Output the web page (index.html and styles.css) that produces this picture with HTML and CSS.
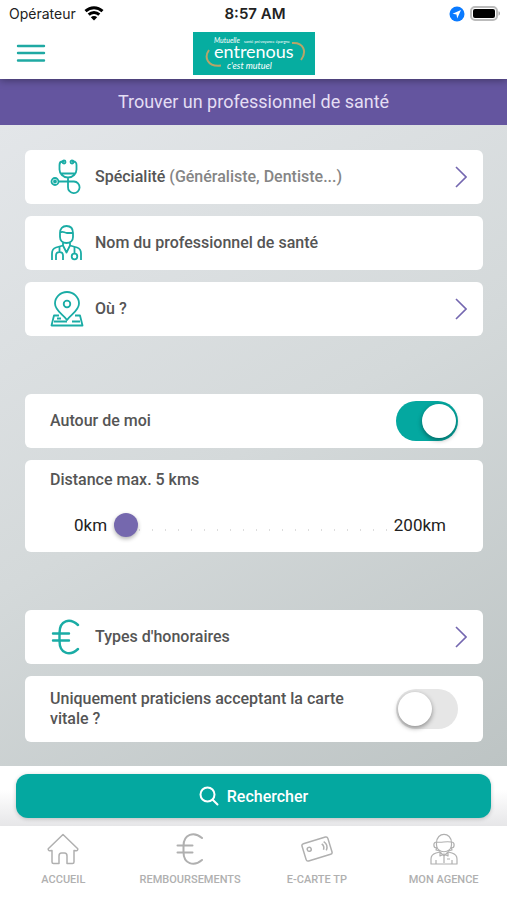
FILE: index.html
```html
<!DOCTYPE html>
<html lang="fr">
<head>
<meta charset="UTF-8">
<meta name="viewport" content="width=device-width, initial-scale=1.0">
<title>Trouver un professionnel de santé</title>
<link rel="stylesheet" href="styles.css">
</head>
<body>

<div class="status-bar">
    <div class="carrier">
        <span>Opérateur</span>
        <svg width="20" height="15" viewBox="0 0 20 15" fill="none" stroke="#000" stroke-width="3">
            <path d="M1.500 5.200C6.500.6 13.500.6 18.500 5.200"/>
            <path d="M4.700 8.700c3-2.800 7.600-2.800 10.600 0"/>
            <path d="M10 14.500 6.800 11.300a4.500 4.500 0 0 1 6.400 0z" fill="#000" stroke="none"/>
        </svg>
    </div>
    <strong class="time">8:57 AM</strong>
    <div class="indicators">
        <svg width="16" height="16" viewBox="0 0 16 16">
            <circle cx="8" cy="8" r="7.500" fill="#0a7aff"/>
            <path d="M12 4 3.500 7.800l4 .7.700 4z" fill="#fff"/>
        </svg>
        <svg width="31" height="16" viewBox="0 0 31 16">
            <rect x="1" y="1" width="26" height="13" rx="4" fill="#fff" stroke="#bbb" stroke-width="2"/>
            <rect x="3" y="3" width="22" height="9" rx="2" fill="#000"/>
            <path d="M28.500 5.300c2 .6 2 3.800 0 4.400z" fill="#aaa"/>
        </svg>
    </div>
</div>

<header class="header">
    <button class="menu-button" type="button" aria-label="Menu">
        <svg width="30" height="20" viewBox="0 0 30 20" stroke="#1fa9a3" stroke-width="2.400" stroke-linecap="round">
            <path d="M2 3h26M2 10h26M2 17.500h26"/>
        </svg>
    </button>
    <svg class="logo" width="122" height="43" viewBox="0 0 122 43">
        <rect width="122" height="43" fill="#06ada0"/>
        <g fill="#fff">
            <text class="logo-small" x="21" y="11">Mutuelle</text>
            <text class="logo-tiny" x="51" y="11">santé prévoyance épargne</text>
            <text class="logo-name" x="21" y="26">entrenous</text>
            <text class="logo-slogan" x="34" y="37">c'est mutuel</text>
        </g>
        <path d="M16 18c-5 7-2 17 12 15.500M99 11c12-1 15 9 9 17" fill="none" stroke="#b9a468" stroke-width="2"/>
    </svg>
</header>

<h1 class="page-title">Trouver un professionnel de santé</h1>

<main class="content">
    <div class="group">
        <button class="card" type="button">
            <svg class="icon" viewBox="0 0 34 36">
                <path d="M14 2.500h-1.500c-2 0-3 1.500-3 3.500v4.500c0 4 3.500 8 8.500 8s8.500-4 8.500-8V6c0-2-1-3.500-3-3.500H22M11 14.500h14M18 18.500V28"/>
                <circle cx="14" cy="3" r="1.500"/>
                <circle cx="22" cy="3" r="1.500"/>
                <circle cx="5" cy="22.500" r="3.500"/>
                <circle cx="5" cy="22.500" r="1"/>
                <path d="M8.500 22.500H24a5.800 5.800 0 1 1-6 5.500"/>
            </svg>
            <span class="label">Spécialité <span class="hint">(Généraliste, Dentiste...)</span></span>
            <svg class="chevron" viewBox="0 0 12 22"><path d="M1 1l10 10L1 21"/></svg>
        </button>
        <label class="card">
            <svg class="icon" viewBox="0 0 34 36">
                <path d="M10 8c0-4.500 2.500-7 6.500-7S23 3.500 23 8v4c0 3.500-2.500 6-6.500 6S10 15.500 10 12zM10 7.500c3.500-2 4 .5 7 .5h6"/>
                <path d="M13 17.500v3l-7 2C3 23.500 2 25.500 2 28.500V35M20 17.500v3l7 2c3 1 4 3 4 6V35"/>
                <path d="M13 20.500l3.500 7 3.500-7M9.500 21.500V27M6 35v-4.500c0-4.500 7-4.500 7 0V35M24.500 22v6.500"/>
                <circle cx="24.500" cy="31.500" r="2.800"/>
            </svg>
            <input class="name-input" type="text" placeholder="Nom du professionnel de santé" aria-label="Nom du professionnel de santé">
        </label>
        <button class="card" type="button">
            <svg class="icon" viewBox="0 0 34 36">
                <path d="M17 29C14 24 5 20 5 12.500a12 11.500 0 0 1 24 0C29 20 20 24 17 29z"/>
                <circle cx="17" cy="13" r="3.300"/>
                <path d="M9 24.500H4L1.500 34.500h31L30 24.500h-5M4 30.500h9l4 0M22 30.500h8M7 27.500h4"/>
            </svg>
            <span class="label">Où ?</span>
            <svg class="chevron" viewBox="0 0 12 22"><path d="M1 1l10 10L1 21"/></svg>
        </button>
    </div>

    <div class="group">
        <label class="card">
            <span class="label">Autour de moi</span>
            <input class="switch" type="checkbox" checked>
        </label>
        <div class="card card-distance">
            <label for="distance">Distance max. 5 kms</label>
            <div class="range-row">
                <span>0km</span>
                <input class="range" id="distance" type="range" min="5" max="200" value="5">
                <span>200km</span>
            </div>
        </div>
    </div>

    <div class="group">
        <button class="card" type="button">
            <svg class="icon euro" viewBox="0 0 34 36">
                <path d="M28 6C20-1.500 9.500 1 9.500 14v8c0 13 10.500 15.500 18.500 8M3 14.500h16M3 21.500h16"/>
            </svg>
            <span class="label">Types d'honoraires</span>
            <svg class="chevron" viewBox="0 0 12 22"><path d="M1 1l10 10L1 21"/></svg>
        </button>
        <label class="card card-tall">
            <span class="label">Uniquement praticiens acceptant la carte vitale ?</span>
            <input class="switch" type="checkbox">
        </label>
    </div>
</main>

<div class="action-bar">
    <button class="search-button" type="button">
        <svg width="20" height="20" viewBox="0 0 20 20" fill="none" stroke="#fff" stroke-width="2" stroke-linecap="round">
            <circle cx="8.500" cy="8.500" r="7"/>
            <path d="M13.700 13.700 18.500 18.500"/>
        </svg>
        Rechercher
    </button>
</div>

<nav class="tab-bar">
    <a href="#">
        <svg class="tab-icon" viewBox="0 0 32 32">
            <path d="M16 1.500 1.500 15.500c-.8 1 .3 2.500 1.500 2.200L5 17.500V29c0 1 .7 1.500 1.500 1.500H12V23c0-2 1-3 2.500-3h3c1.500 0 2.500 1 2.500 3v7.500h5.500c.8 0 1.500-.5 1.500-1.500V17.500l2 .2c1.200.3 2.300-1.200 1.500-2.200z"/>
        </svg>
        ACCUEIL
    </a>
    <a href="#">
        <svg class="tab-icon tab-euro" viewBox="0 0 32 32">
            <path d="M28 5C20-2 9.500 1 9.500 13v6c0 12 10.500 15 18.500 8M3.500 12.500h15M3.500 19.500h15"/>
        </svg>
        REMBOURSEMENTS
    </a>
    <a href="#">
        <svg class="tab-icon" viewBox="0 0 32 32">
            <g transform="rotate(-17 16 16)">
                <rect x="2.500" y="7" width="27" height="18" rx="2"/>
                <circle cx="8.500" cy="14" r="2"/>
                <path d="M22 12.500c1.500 2 1.500 4 0 6M24.500 11c2.500 3 2.500 6 0 9"/>
            </g>
        </svg>
        E-CARTE TP
    </a>
    <a href="#">
        <svg class="tab-icon tab-agent" viewBox="0 0 32 32">
            <path d="M8.500 10C8.500-1.500 23.500-1.500 23.500 10v2c0 9-15 9-15 0zM8.500 9C5 9 5 15 8.500 15M23.500 9c3.500 0 3.500 6 0 6M9 9c5 1 8-1 14 0"/>
            <path d="M3 31v-5c0-4 2-5 5-6l4-1 4 4 4-4 4 1c3 1 5 2 5 6v5zM12 19v4l4-2 4 2v-4M16 23v7M8 31v-4M24 31v-4M19 26h3M9 14l-1 3 4 1M23 14l1 3-4 1"/>
        </svg>
        MON AGENCE
    </a>
</nav>

</body>
</html>
```
FILE: styles.css
```css
* {
    box-sizing: border-box;
}

body {
    display: flex;
    flex-direction: column;
    min-height: 100vh;
    margin: 0;
    background-color: #ffffff;
    font-family: Roboto, "Liberation Sans", sans-serif;
    font-size: 16px;
    color: #555555;
}

button {
    border: none;
    font: inherit;
    color: inherit;
    cursor: pointer;
}

.status-bar {
    display: grid;
    grid-template-columns: 1fr auto 1fr;
    align-items: center;
    height: 27px;
    padding: 0 6px 0 9px;
    font-family: Inter, sans-serif;
    font-size: 14px;
    color: #222222;
}

.carrier,
.indicators {
    display: flex;
    align-items: center;
    gap: 8px;
}

.indicators {
    gap: 5px;
    justify-content: flex-end;
}

.time {
    font-size: 15px;
    font-weight: 600;
}

.header {
    position: relative;
    z-index: 1;
    display: grid;
    grid-template-columns: 1fr auto 1fr;
    align-items: center;
    height: 52px;
    padding: 0 16px;
    box-shadow: 0 1px 8px rgba(0, 0, 0, 0.4);
    clip-path: inset(0 0 -16px 0);
    background-color: #ffffff;
}

.menu-button {
    justify-self: start;
    padding: 0;
    background: none;
}

.menu-button svg,
.logo {
    display: block;
}

.logo text {
    font-family: Lato, sans-serif;
}

.logo .logo-small {
    font-size: 7px;
    font-style: italic;
}

.logo .logo-tiny {
    font-size: 4px;
}

.logo .logo-name {
    font-size: 18px;
}

.logo .logo-slogan {
    font-size: 9px;
    font-style: italic;
}

.page-title {
    margin: 0;
    background-color: #64559f;
    font-size: 18px;
    font-weight: 400;
    line-height: 46px;
    text-align: center;
    color: #e4def4;
}

.content {
    flex: 1;
    display: flex;
    flex-direction: column;
    gap: 58px;
    padding: 25px 24px 23px 25px;
    background: linear-gradient(150deg, #e3e6e9, #d4d9da 50%, #bdc4c4);
}

.group {
    display: flex;
    flex-direction: column;
    gap: 12px;
}

.card {
    display: flex;
    align-items: center;
    width: 100%;
    min-height: 54px;
    padding: 0 16px 0 25px;
    border-radius: 6px;
    background-color: #ffffff;
    font-weight: 500;
    line-height: 20px;
    text-align: left;
}

.label {
    flex: 1;
}

.hint {
    color: #858585;
}

.icon {
    width: 34px;
    height: 36px;
    margin-right: 11px;
    fill: none;
    stroke: #1aaca5;
    stroke-width: 1.8;
    stroke-linejoin: round;
}

.euro {
    stroke-width: 2.4;
    stroke-linecap: round;
}

.chevron {
    width: 12px;
    height: 22px;
    fill: none;
    stroke: #7467b0;
    stroke-width: 1.6;
}

.name-input {
    flex: 1;
    min-width: 0;
    padding: 0;
    border: none;
    outline: none;
    font: inherit;
    color: inherit;
}

.name-input::placeholder {
    color: #555555;
    opacity: 1;
}

.switch {
    appearance: none;
    flex-shrink: 0;
    width: 62px;
    height: 40px;
    margin: 0 9px 0 40px;
    border-radius: 20px;
    background-color: #e6e6e6;
    cursor: pointer;
}

.switch::before {
    content: "";
    display: block;
    width: 34px;
    height: 34px;
    margin: 3px 2px;
    border-radius: 50%;
    background-color: #ffffff;
    box-shadow: 0 2px 5px rgba(0, 0, 0, 0.4);
}

.switch:checked {
    background-color: #04a8a0;
}

.switch:checked::before {
    margin-left: 26px;
}

.card-distance {
    flex-direction: column;
    align-items: stretch;
    gap: 18px;
    padding: 10px 25px;
}

.range-row {
    display: flex;
    align-items: center;
    gap: 7px;
    padding: 0 12px 0 24px;
    font-size: 17px;
    font-weight: 400;
    color: #222222;
}

.range {
    appearance: none;
    flex: 1;
    min-width: 0;
    height: 34px;
    margin: 0;
    background: none;
}

/* tick marks along the track */
.range::-webkit-slider-runnable-track {
    height: 24px;
    background: radial-gradient(circle, #dddddd 1px, transparent 1px) 6px 5px / 13px 24px repeat-x;
}

.range::-webkit-slider-thumb {
    appearance: none;
    width: 24px;
    height: 24px;
    border-radius: 50%;
    background-color: #7568ae;
    box-shadow: 0 2px 4px rgba(0, 0, 0, 0.3);
}

.card-tall {
    min-height: 66px;
}

.action-bar {
    padding: 8px 16px;
    background: linear-gradient(#ffffff 40%, #e6e6e8);
}

.search-button {
    display: flex;
    justify-content: center;
    align-items: center;
    gap: 8px;
    width: 100%;
    height: 44px;
    border-radius: 12px;
    background-color: #04a8a0;
    box-shadow: 0 1px 4px rgba(0, 0, 0, 0.2);
    font-weight: 500;
    color: #ffffff;
}

.tab-bar {
    display: grid;
    grid-template-columns: repeat(4, 1fr);
    height: 74px;
    padding-top: 7px;
    background-color: #ffffff;
}

.tab-bar a {
    display: flex;
    flex-direction: column;
    align-items: center;
    gap: 8px;
    font-size: 11px;
    font-weight: 500;
    line-height: 14px;
    text-decoration: none;
    color: #b0b0b0;
}

.tab-icon {
    width: 32px;
    height: 32px;
    fill: none;
    stroke: #b0b0b0;
    stroke-width: 1.5;
    stroke-linejoin: round;
}

.tab-euro {
    stroke-width: 2;
    stroke-linecap: round;
}

.tab-agent {
    stroke-width: 1.2;
}
```
